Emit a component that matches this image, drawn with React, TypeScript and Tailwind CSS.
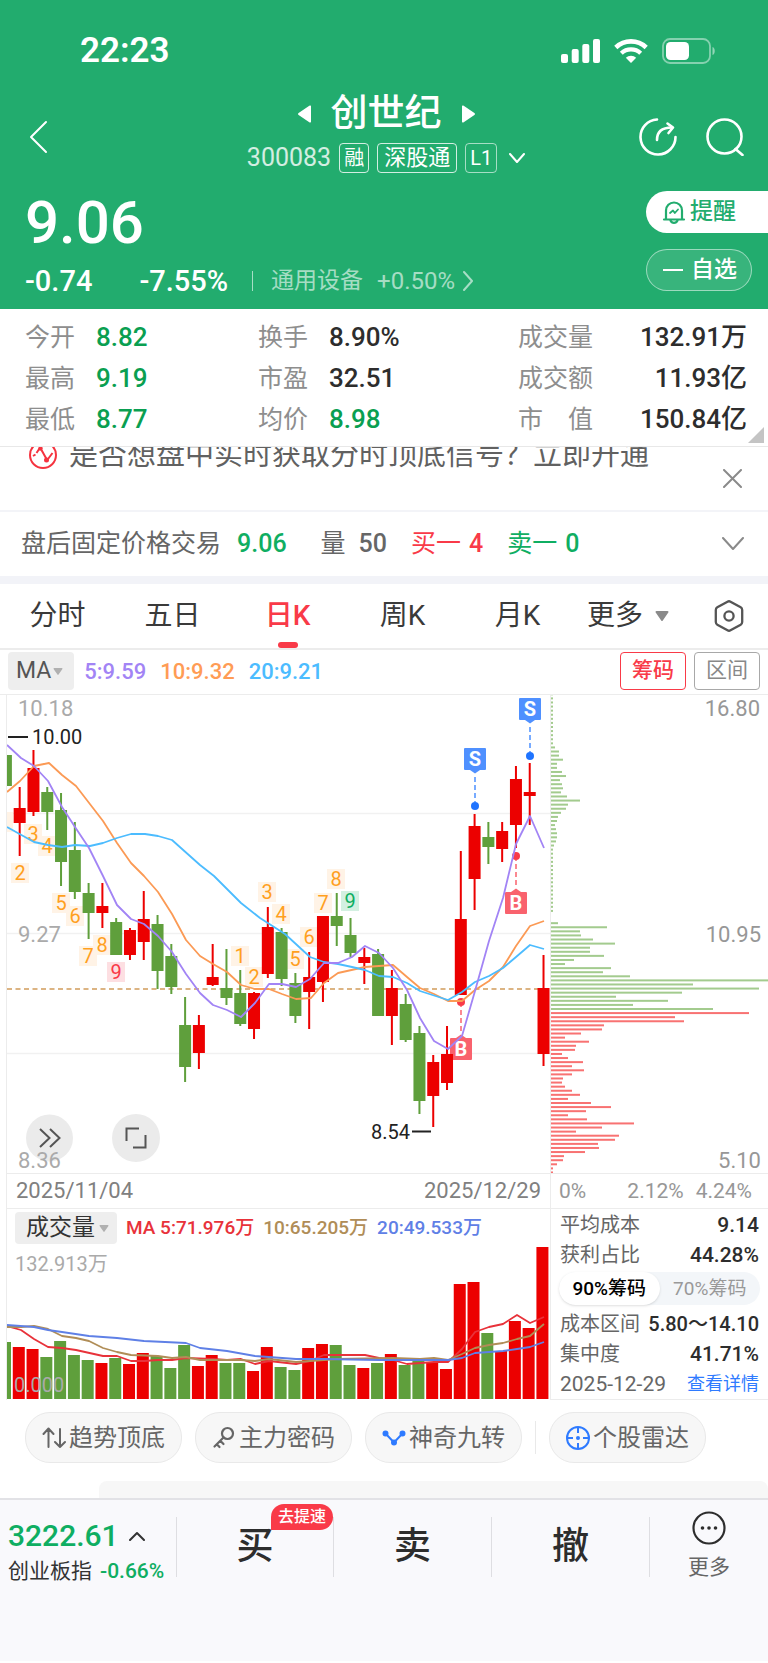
import React from "react";

type Candle = {
  up: boolean;
  high: number;
  top: number;
  bottom: number;
  low: number;
  volume: number;
};

const RED = "#ec0000";
const GREEN = "#5f9f3c";
const STEP = 13.785;

// up, high, body top, body bottom, low, top of the volume bar
const rows: [number, number, number, number, number, number][] = [
  [0, 755, 755, 786, 786, 1342],
  [1, 787, 808, 823, 856, 1347],
  [1, 750, 768, 812, 816, 1349],
  [0, 787, 792, 812, 830, 1357],
  [0, 793, 810, 862, 886, 1341],
  [0, 822, 850, 892, 899, 1355],
  [0, 883, 893, 913, 939, 1360],
  [1, 883, 906, 913, 928, 1363],
  [0, 918, 922, 955, 955, 1358],
  [1, 928, 930, 955, 960, 1364],
  [1, 891, 919, 942, 960, 1353],
  [0, 915, 924, 971, 989, 1356],
  [0, 944, 956, 987, 994, 1368],
  [0, 997, 1025, 1067, 1082, 1345],
  [1, 1015, 1025, 1053, 1069, 1366],
  [1, 944, 977, 985, 986, 1355],
  [0, 949, 988, 998, 1005, 1363],
  [0, 970, 993, 1024, 1026, 1363],
  [1, 992, 993, 1029, 1039, 1371],
  [1, 907, 927, 974, 978, 1347],
  [0, 928, 932, 979, 986, 1367],
  [0, 973, 983, 1016, 1023, 1370],
  [1, 952, 977, 992, 1029, 1348],
  [1, 916, 916, 982, 1002, 1344],
  [0, 893, 916, 926, 946, 1345],
  [0, 918, 935, 953, 957, 1365],
  [1, 948, 957, 963, 984, 1368],
  [0, 949, 954, 1016, 1016, 1363],
  [1, 970, 988, 1016, 1045, 1354],
  [0, 994, 1004, 1040, 1042, 1365],
  [0, 1026, 1033, 1101, 1114, 1360],
  [1, 1055, 1062, 1096, 1127, 1362],
  [1, 1026, 1054, 1083, 1090, 1369],
  [1, 851, 919, 995, 995, 1284],
  [1, 814, 826, 879, 910, 1282],
  [0, 822, 837, 847, 864, 1333],
  [1, 822, 831, 849, 862, 1351],
  [1, 766, 779, 825, 848, 1321],
  [1, 763, 792, 796, 825, 1328],
  [1, 955, 988, 1054, 1066, 1247],
];

const candles: Candle[] = rows.map(([up, high, top, bottom, low, volume]) => ({
  up: up === 1,
  high,
  top,
  bottom,
  low,
  volume,
}));

const ma5 =
  "7,745 21,758 34,766 48,781 62,807 75,827 89,848 103,876 117,905 131,919 144,924 158,936 172,952 186,974 200,993 213,1005 227,1010 241,1017 255,1003 269,984 282,984 296,987 310,979 324,963 338,963 352,957 365,946 379,953 393,968 407,990 420,1018 434,1041 448,1049 462,1036 475,991 489,941 503,898 516,844 530,816 544,848";
const ma10 =
  "7,792 20,781 34,766 49,763 62,775 76,786 103,821 117,843 131,863 144,876 158,892 172,914 186,940 200,956 213,964 227,972 241,985 255,989 269,989 282,994 296,999 311,998 324,983 338,973 365,967 379,966 393,965 407,977 420,988 434,994 448,1001 462,1001 475,990 489,981 503,967 516,946 530,926 544,921";
const ma20 =
  "7,827 34,842 48,845 62,847 75,845 90,846 103,843 117,838 131,834 145,834 158,836 172,840 200,865 214,876 228,890 241,903 260,918 285,934 310,957 324,962 338,964 352,967 365,970 379,976 393,977 407,983 420,991 448,1000 462,992 475,982 489,976 503,968 516,957 530,945 544,949";

const vol5 =
  "7,1326 21,1330 34,1339 48,1347 62,1348 76,1350 103,1356 117,1356 131,1361 144,1361 158,1360 172,1360 186,1358 213,1359 227,1360 241,1359 255,1364 269,1361 296,1364 310,1361 324,1355 365,1355 379,1358 393,1360 407,1364 434,1362 448,1362 462,1349 475,1332 489,1327 503,1324 517,1315 530,1323 544,1317";
const vol10 =
  "7,1327 21,1327 34,1326 48,1329 62,1336 76,1338 89,1341 103,1348 117,1352 131,1355 158,1356 172,1358 186,1357 200,1360 241,1360 255,1361 269,1359 296,1362 324,1360 338,1359 393,1358 420,1359 434,1358 448,1360 462,1354 475,1348 489,1345 503,1343 517,1339 530,1336 544,1324";
const vol20 =
  "7,1325 34,1327 48,1330 62,1332 89,1336 117,1338 144,1341 186,1343 200,1348 227,1351 255,1356 296,1359 324,1359 379,1360 448,1360 462,1358 475,1353 503,1351 517,1349 530,1347 544,1342";

const counts: { n: string; x: number; y: number; tone?: "red" | "green" }[] = [
  { n: "1", x: 4, y: 822 },
  { n: "2", x: 20, y: 873 },
  { n: "3", x: 33, y: 834 },
  { n: "4", x: 47, y: 846 },
  { n: "5", x: 61, y: 903 },
  { n: "6", x: 75, y: 916 },
  { n: "7", x: 88, y: 956 },
  { n: "8", x: 102, y: 945 },
  { n: "9", x: 116, y: 972, tone: "red" },
  { n: "1", x: 240, y: 956 },
  { n: "2", x: 254, y: 977 },
  { n: "3", x: 267, y: 892 },
  { n: "4", x: 281, y: 914 },
  { n: "5", x: 295, y: 959 },
  { n: "6", x: 309, y: 937 },
  { n: "7", x: 323, y: 903 },
  { n: "8", x: 336, y: 879 },
  { n: "9", x: 350, y: 901, tone: "green" },
];

const chipsAbove = [
  2, 2, 2, 2, 2, 2, 2, 2, 2, 2, 2, 2, 2, 4, 8, 8, 12, 6, 6, 11, 15, 9, 11, 12,
  10, 16, 29, 17, 15, 10, 7, 6, 4, 5, 6, 6, 5, 3, 2, 2, 2, 2, 2, 2, 2, 2, 2, 2,
  2, 2, 2, 2, 2, 2, 0, 0, 7, 56, 29, 30, 42, 64, 39, 39, 53, 23, 14, 60, 52,
  79, 217, 142, 208, 131, 65, 117, 82, 162,
];
const chipsBelow = [
  198, 124, 133, 53, 51, 30, 14, 38, 25, 24, 11, 17, 32, 21, 33, 21, 12, 11,
  14, 21, 29, 17, 40, 60, 35, 17, 36, 83, 51, 25, 68, 64, 47, 48, 34, 13, 12,
  6, 2, 2,
];

function Caret({ className }: { className: string }) {
  return (
    <svg viewBox="0 0 14 10" className={className} fill="currentColor" aria-hidden="true">
      <path d="M1.5 0h11a1 1 0 0 1 .8 1.6L7.8 9.4a1 1 0 0 1-1.6 0L.7 1.6A1 1 0 0 1 1.5 0z" />
    </svg>
  );
}

function Chevron({ className, d, box }: { className: string; d: string; box: string }) {
  return (
    <svg
      viewBox={box}
      className={className}
      fill="none"
      stroke="currentColor"
      strokeWidth="2"
      strokeLinecap="round"
      strokeLinejoin="round"
      aria-hidden="true"
    >
      <path d={d} />
    </svg>
  );
}

function StatusBar() {
  return (
    <div className="flex items-center justify-between pt-8 pr-[52px] pl-20">
      <span className="text-[35px] leading-[38px] font-semibold">22:23</span>
      <div className="flex items-center gap-[14px]">
        <svg viewBox="0 0 39 24" className="h-6 w-[39px]" fill="currentColor" aria-hidden="true">
          <rect x="0" y="15" width="7" height="9" rx="2" />
          <rect x="10.7" y="10" width="7" height="14" rx="2" />
          <rect x="21.3" y="5" width="7" height="19" rx="2" />
          <rect x="32" y="0" width="7" height="24" rx="2" />
        </svg>
        <svg viewBox="0 0 34 24" className="h-6 w-[34px]" fill="none" stroke="currentColor" aria-hidden="true">
          <path d="M1.8 8.5a22 22 0 0 1 30.4 0" strokeWidth="4.6" />
          <path d="M7.3 14.3a14 14 0 0 1 19.4 0" strokeWidth="4.2" />
          <path d="M17 24l-5.2-5.2a7.5 7.5 0 0 1 10.4 0z" fill="currentColor" stroke="none" />
        </svg>
        <svg viewBox="0 0 54 26" className="h-[26px] w-[54px]" aria-hidden="true">
          <rect x="1" y="1" width="47" height="24" rx="7" fill="none" stroke="#fff" strokeOpacity=".45" strokeWidth="1.8" />
          <rect x="4" y="4" width="23" height="18" rx="4.5" fill="#fff" />
          <path d="M50.5 9c3 .8 3 7.2 0 8z" fill="#fff" fillOpacity=".5" />
        </svg>
      </div>
    </div>
  );
}

function Header() {
  return (
    <header className="bg-[#22ac6e] pb-3 text-white">
      <StatusBar />
      <div className="grid grid-cols-[1fr_auto_1fr] items-center pt-[18px] pr-6 pl-7">
        <button type="button" aria-label="返回" className="justify-self-start pt-3">
          <Chevron box="0 0 20 34" d="M18 2 3 17l15 15" className="h-[34px] w-5" />
        </button>
        <div>
          <div className="flex items-center justify-center gap-5">
            <svg viewBox="0 0 13 18" className="h-[18px] w-[13px]" fill="currentColor" aria-hidden="true">
              <path d="M13 1.5v15a1 1 0 0 1-1.7.8L.6 10a1.3 1.3 0 0 1 0-2L11.3.7A1 1 0 0 1 13 1.5z" />
            </svg>
            <h1 className="text-[37px] leading-[51px] font-medium">创世纪</h1>
            <svg viewBox="0 0 13 18" className="h-[18px] w-[13px]" fill="currentColor" aria-hidden="true">
              <path d="M0 1.5v15a1 1 0 0 0 1.7.8L12.4 10a1.3 1.3 0 0 0 0-2L1.7.7A1 1 0 0 0 0 1.5z" />
            </svg>
          </div>
          <div className="mt-1 flex items-center gap-2">
            <span className="text-[25px] leading-[30px] text-white/80">300083</span>
            <span className="rounded border border-white/80 px-1 text-[20px] leading-7">融</span>
            <span className="rounded border border-white/80 px-[6px] text-[22px] leading-7">深股通</span>
            <span className="rounded border border-white/60 px-1 text-[20px] leading-7">L1</span>
            <Chevron box="0 0 16 10" d="m1 1 7 8 7-8" className="ml-1 h-[10px] w-4" />
          </div>
        </div>
        <div className="flex gap-[29px] justify-self-end pt-3">
          <button type="button" aria-label="分享">
            <svg viewBox="0 0 38 38" className="size-[38px]" fill="none" stroke="currentColor" strokeWidth="2.6" strokeLinecap="round" strokeLinejoin="round" aria-hidden="true">
              <path d="M18 1.5A17.5 17.5 0 1 0 36.5 19" />
              <path d="M18 22c0-8 4-12.5 15-12.5" />
              <path d="m28.5 5.5 5.5 4-4.5 5.5" />
            </svg>
          </button>
          <button type="button" aria-label="搜索">
            <svg viewBox="0 0 38 38" className="size-[38px]" fill="none" stroke="currentColor" strokeWidth="2.6" strokeLinecap="round" aria-hidden="true">
              <circle cx="18.5" cy="18.5" r="17" />
              <path d="m29.5 31 7 6" />
            </svg>
          </button>
        </div>
      </div>
      <div className="mt-[18px] flex justify-between">
        <div className="pl-[25px]">
          <div className="text-[60px] leading-[64px] font-medium">9.06</div>
          <div className="mt-[10px] flex items-center text-[29px] leading-8 font-medium">
            <span>-0.74</span>
            <span className="ml-[47px]">-7.55%</span>
            <a href="#sector" className="ml-6 flex items-center font-normal text-white/60">
              <span className="mr-[18px] h-5 w-px bg-white/60" />
              <span className="text-[23px]">通用设备</span>
              <span className="mr-2 ml-[14px] text-[24px]">+0.50%</span>
              <Chevron box="0 0 11 20" d="m1 1 8 9-8 9" className="h-5 w-[11px]" />
            </a>
          </div>
        </div>
        <div className="flex flex-col items-end gap-4">
          <button type="button" className="flex h-[42px] items-center gap-1 rounded-l-full bg-white pr-8 pl-4 text-[23px] font-medium text-[#22ac6e]">
            <svg viewBox="0 0 24 24" className="size-6" fill="none" stroke="currentColor" strokeWidth="2.2" strokeLinecap="round" strokeLinejoin="round" aria-hidden="true">
              <path d="M2 19.500h20M4 19V10.500a8 8 0 0 1 16 0V19" />
              <path d="M8.500 20.500a3.800 3.800 0 0 0 7 0" />
              <path d="m8 13 3-2.500 1.800 2.500L16 9.500" strokeWidth="1.8" />
            </svg>
            提醒
          </button>
          <button type="button" className="mr-4 flex h-[42px] items-center gap-2 rounded-full border border-white/50 bg-white/10 pr-[14px] pl-4 text-[23px] font-medium">
            <span className="h-[2px] w-5 bg-white" />
            自选
          </button>
        </div>
      </div>
    </header>
  );
}

function Stat({ label, value, tone }: { label: string; value: string; tone: string }) {
  return (
    <div className="flex items-center gap-[21px]">
      <dt className="text-[#8e8e8e]">{label}</dt>
      <dd className={"text-[26px] font-medium " + tone}>{value}</dd>
    </div>
  );
}

function WideStat({ label, value }: { label: string; value: string }) {
  return (
    <div className="flex items-center justify-between">
      <dt className="whitespace-pre text-[#8e8e8e]">{label}</dt>
      <dd className="text-[26px] font-medium text-[#2d2d2d]">{value}</dd>
    </div>
  );
}

function Stats() {
  return (
    <section className="relative border-b border-[#e8e8e8] pt-2 pr-[21px] pb-[6px] pl-[25px]">
      <dl className="grid grid-cols-[233fr_260fr_229fr] text-[25px] leading-[41px]">
        <Stat label="今开" value="8.82" tone="text-[#0a9f51]" />
        <Stat label="换手" value="8.90%" tone="text-[#2d2d2d]" />
        <WideStat label="成交量" value="132.91万" />
        <Stat label="最高" value="9.19" tone="text-[#0a9f51]" />
        <Stat label="市盈" value="32.51" tone="text-[#2d2d2d]" />
        <WideStat label="成交额" value="11.93亿" />
        <Stat label="最低" value="8.77" tone="text-[#0a9f51]" />
        <Stat label="均价" value="8.98" tone="text-[#0a9f51]" />
        <WideStat label="市　值" value="150.84亿" />
      </dl>
      <svg viewBox="0 0 16 16" className="absolute right-1 bottom-[3px] size-4 text-[#c4c4c4]" fill="currentColor" aria-hidden="true">
        <path d="M16 0v16H0z" />
      </svg>
    </section>
  );
}

function Notice() {
  return (
    <section className="flex items-start justify-between overflow-hidden border-b-2 border-[#f3f4f8] pr-[26px] pb-[22px] pl-[29px]">
      <div className="-mt-3 flex items-center gap-3 text-[29px] leading-10 text-[#616161]">
        <svg viewBox="0 0 28 28" className="size-7 text-[#f5333f]" fill="none" stroke="currentColor" strokeWidth="2" aria-hidden="true">
          <circle cx="14" cy="14" r="13" />
          <path d="m4 15 2.500-1.500M7.500 12l3-4.500m2 1.500 5 9m1.500 0 4.500-6" />
          <circle cx="11.5" cy="7.5" r="2.2" fill="currentColor" stroke="none" />
          <circle cx="17.5" cy="19" r="2.5" fill="currentColor" stroke="none" />
        </svg>
        是否想盘中实时获取分时顶底信号？立即开通
      </div>
      <button type="button" aria-label="关闭" className="mt-[22px] text-[#8a8a8a]">
        <Chevron box="0 0 19 19" d="m1 1 17 17M18 1 1 18" className="size-[19px]" />
      </button>
    </section>
  );
}

function AfterHours() {
  return (
    <section className="flex items-center justify-between pr-6 pl-[21px] text-[25px] leading-[64px] text-[#666]">
      <div className="flex">
        盘后固定价格交易
        <span className="ml-4 font-medium text-[#0fae62]">9.06</span>
        <span className="ml-[34px]">量</span>
        <span className="ml-[13px] font-medium">50</span>
        <span className="ml-6 text-[#f93a48]">买一</span>
        <span className="ml-2 font-medium text-[#f93a48]">4</span>
        <span className="ml-6 text-[#0fae62]">卖一</span>
        <span className="ml-2 font-medium text-[#0fae62]">0</span>
      </div>
      <button type="button" aria-label="展开" className="text-[#8a8a8a]">
        <Chevron box="0 0 22 14" d="m1 1 10 11L21 1" className="h-[14px] w-[22px]" />
      </button>
    </section>
  );
}

function Tabs() {
  return (
    <nav className="grid grid-cols-[repeat(5,115fr)_193fr] border-t-8 border-b-2 border-t-[#f2f3f8] border-b-[#ececec] text-[28px] leading-[64px] text-[#3a3a3a]">
      <button type="button">分时</button>
      <button type="button">五日</button>
      <button type="button" className="relative font-medium text-[#f93a48]">
        日K
        <span className="absolute bottom-0 left-1/2 h-[6px] w-5 -translate-x-1/2 rounded-full bg-[#f93a48]" />
      </button>
      <button type="button">周K</button>
      <button type="button">月K</button>
      <div className="flex items-center justify-between pr-6 pl-3">
        <button type="button" className="flex items-center gap-3">
          更多
          <Caret className="h-[10px] w-[14px] text-[#8a8a8a]" />
        </button>
        <button type="button" aria-label="设置" className="text-[#555]">
          <svg viewBox="0 0 30 32" className="h-8 w-[30px]" fill="none" stroke="currentColor" strokeWidth="2.3" strokeLinejoin="round" aria-hidden="true">
            <path d="M13.500 1.700a3 3 0 0 1 3 0l10.200 5.600a3 3 0 0 1 1.500 2.600v12.200a3 3 0 0 1-1.500 2.600l-10.200 5.600a3 3 0 0 1-3 0L3.300 24.700a3 3 0 0 1-1.500-2.600V9.900a3 3 0 0 1 1.500-2.600z" />
            <circle cx="15" cy="16" r="4.6" />
          </svg>
        </button>
      </div>
    </nav>
  );
}

function MaBar() {
  return (
    <div className="flex items-center justify-between border-b border-[#ececec] px-2 pt-[2px] pb-1 text-[22px]">
      <div className="flex items-center gap-[14px] font-medium">
        <button type="button" className="-mr-1 flex h-[38px] items-center gap-[2px] rounded bg-[#eee] pr-[11px] pl-2 text-[23px] font-normal text-[#555]">
          MA
          <Caret className="h-[7px] w-[10px] text-[#b0b0b0]" />
        </button>
        <span className="text-[#a284f5]">5:9.59</span>
        <span className="text-[#ff9c55]">10:9.32</span>
        <span className="text-[#4cbcff]">20:9.21</span>
      </div>
      <div className="flex gap-2 text-[21px]">
        <button type="button" className="h-[38px] rounded border border-[#f93a48] px-[11px] font-medium text-[#f93a48]">
          筹码
        </button>
        <button type="button" className="h-[38px] rounded border border-[#a8a8a8] px-[11px] text-[#888]">
          区间
        </button>
      </div>
    </div>
  );
}

function CountTag({ n, x, y, tone }: { n: string; x: number; y: number; tone?: "red" | "green" }) {
  const fill = tone === "red" ? "#fddfe2" : tone === "green" ? "#d3f0e1" : "#fff3e6";
  const color = tone === "red" ? "#f93a48" : tone === "green" ? "#0fae62" : "#ffa01e";
  return (
    <g>
      <rect x={x - 9} y={y - 10} width="18" height="20" fill={fill} />
      <text x={x} y={y + 7} fontSize="20" textAnchor="middle" fill={color}>
        {n}
      </text>
    </g>
  );
}

function TradeMark({ kind, x, y }: { kind: "B" | "S"; x: number; y: number }) {
  const sell = kind === "S";
  const dir = sell ? 1 : -1;
  const box = sell ? "#4f90ff" : "#f9626d";
  const dot = sell ? "#1f74ff" : "#f93a48";
  return (
    <g>
      <circle cx={x} cy={y + 47 * dir} r="4" fill={dot} />
      <path d={`M${x} ${y + 18 * dir}V${y + 43 * dir}`} stroke={dot} strokeWidth="1.2" strokeDasharray="5 3" />
      <rect x={x - 11} y={y - 11} width="22" height="22" rx="1" fill={box} />
      <path d={`M${x - 5} ${y + 11 * dir}h10l-5 ${3.5 * dir}z`} fill={box} />
      <text x={x} y={y + 7} fontSize="20" fontWeight="700" textAnchor="middle" fill="#fff">
        {kind}
      </text>
    </g>
  );
}

function PriceChart() {
  return (
    <div className="relative">
      <svg viewBox="7 695 543 478" className="w-full" role="img" aria-label="日K线">
        <path d="M7 813.500h543M7 933.500h543M7 1053.500h543" stroke="#f1f1f1" strokeWidth="1.5" />
        <path d="M7 989h543" stroke="#dcb483" strokeWidth="1.8" strokeDasharray="5 3.5" />
        {counts.map((c) => (
          <CountTag key={c.x} {...c} />
        ))}
        <TradeMark kind="B" x={461} y={1049} />
        {candles.map((c, i) => {
          const x = 5.9 + i * STEP;
          const color = c.up ? RED : GREEN;
          return (
            <g key={i} fill={color}>
              <rect x={x - 1} y={c.high} width="2" height={c.low - c.high} />
              <rect x={x - 6} y={c.top} width="12" height={c.bottom - c.top} />
            </g>
          );
        })}
        <TradeMark kind="S" x={475} y={759} />
        <TradeMark kind="S" x={530} y={709} />
        <TradeMark kind="B" x={516} y={903} />
        <g fill="none" strokeWidth="1.8" strokeLinejoin="round">
          <polyline points={ma10} stroke="#fb9a55" />
          <polyline points={ma20} stroke="#4cbcff" />
          <polyline points={ma5} stroke="#a284f5" />
        </g>
        <path d="M8 737h20M412 1131.500h19" stroke="#222" strokeWidth="2" />
        <g fontSize="20" fill="#222">
          <text x="32" y="744">10.00</text>
          <text x="371" y="1139">8.54</text>
        </g>
        <g fontSize="22" fill="#aaa">
          <text x="18" y="716">10.18</text>
          <text x="18" y="942">9.27</text>
        </g>
        <circle cx="49.5" cy="1138" r="23.5" fill="#ebebeb" />
        <text x="18" y="1168" fontSize="22" fill="#aaa">8.36</text>
      </svg>
      <div className="absolute bottom-[11px] left-[19px] flex gap-[38px] text-[#555]">
        <button type="button" aria-label="快进" className="grid size-12 place-items-center">
          <svg viewBox="0 0 22 20" className="h-5 w-[22px]" fill="none" stroke="currentColor" strokeWidth="2" aria-hidden="true">
            <path d="m1 1 9.500 9L1 19M11 1l9.500 9L11 19" />
          </svg>
        </button>
        <button type="button" aria-label="全屏" className="grid size-12 place-items-center rounded-full bg-[#ebebeb]">
          <svg viewBox="0 0 22 22" className="size-[22px]" fill="none" stroke="currentColor" strokeWidth="2" aria-hidden="true">
            <path d="M14 1.500H1.500V14M8 20.500h12.500V8" />
          </svg>
        </button>
      </div>
    </div>
  );
}

function VolumeChart() {
  return (
    <div>
      <div className="flex items-center gap-[9px] pt-[3px] pl-2 text-[19px] font-medium">
        <button type="button" className="flex h-8 items-center gap-1 rounded bg-[#eee] pr-2 pl-[11px] text-[23px] font-normal text-[#333]">
          成交量
          <Caret className="h-[7px] w-[10px] text-[#b0b0b0]" />
        </button>
        <span className="text-[#e8323a]">MA 5:71.976万</span>
        <span className="text-[#b08d57]">10:65.205万</span>
        <span className="text-[#5f80e6]">20:49.533万</span>
      </div>
      <svg viewBox="7 1244 543 155" className="w-full" role="img" aria-label="成交量">
        <text x="15" y="1271" fontSize="20" fill="#aaa">132.913万</text>
        {candles.map((c, i) => (
          <rect
            key={i}
            x={-1 + i * 13.78}
            y={c.volume}
            width="12"
            height={1399 - c.volume}
            fill={c.up ? RED : GREEN}
          />
        ))}
        <g fill="none" strokeWidth="1.8" strokeLinejoin="round">
          <polyline points={vol5} stroke="#e8323a" />
          <polyline points={vol10} stroke="#b08d57" />
          <polyline points={vol20} stroke="#5f80e6" />
        </g>
        <text x="14" y="1392" fontSize="20" fill="#aaa">0.000</text>
      </svg>
    </div>
  );
}

function ChipBars({ widths, from, color }: { widths: number[]; from: number; color: string }) {
  return (
    <g fill={color}>
      {widths.map((w, i) => (
        <rect key={i} x="551" y={693.3 + (from + i) * 4.087} width={w} height="2" />
      ))}
    </g>
  );
}

function ChipPanel() {
  return (
    <aside className="w-[218px] shrink-0 border-l border-[#ececec]">
      <svg viewBox="551 695 217 478" className="w-full" role="img" aria-label="筹码分布">
        <ChipBars widths={chipsAbove} from={0} color="#a3cb8e" />
        <ChipBars widths={chipsBelow} from={chipsAbove.length} color="#f87272" />
        <g fontSize="22" fill="#979797" textAnchor="end">
          <text x="760" y="716">16.80</text>
          <text x="761" y="942">10.95</text>
          <text x="761" y="1168">5.10</text>
        </g>
      </svg>
      <div className="flex border-y border-[#ececec] pr-4 pl-2 text-[21px] leading-[34px] text-[#979797]">
        <span className="mr-auto">0%</span>
        <span className="mr-3">2.12%</span>
        <span>4.24%</span>
      </div>
      <dl className="pt-px pr-[9px] pl-[9px] text-[20px] leading-[30px] text-[#666]">
        <div className="flex justify-between">
          <dt>平均成本</dt>
          <dd className="text-[21px] font-medium text-[#2d2d2d]">9.14</dd>
        </div>
        <div className="flex justify-between">
          <dt>获利占比</dt>
          <dd className="text-[21px] font-medium text-[#2d2d2d]">44.28%</dd>
        </div>
      </dl>
      <div className="mx-2 mt-[2px] mb-1 grid grid-cols-2 rounded-full bg-[#f3f6f9] text-[19px] leading-[33px] text-[#999]">
        <button type="button" className="rounded-full bg-white font-medium text-black shadow-sm">
          90%筹码
        </button>
        <button type="button">70%筹码</button>
      </div>
      <dl className="px-[9px] text-[20px] leading-[30px] text-[#666]">
        <div className="flex justify-between">
          <dt>成本区间</dt>
          <dd className="font-medium text-[#2d2d2d]">5.80～14.10</dd>
        </div>
        <div className="flex justify-between">
          <dt>集中度</dt>
          <dd className="text-[21px] font-medium text-[#2d2d2d]">41.71%</dd>
        </div>
      </dl>
      <div className="flex justify-between border-b border-[#ececec] px-[9px] text-[20px] leading-[30px] text-[#666]">
        <span className="text-[21px]">2025-12-29</span>
        <a href="#detail" className="text-[18px] text-[#2f7bff]">
          查看详情
        </a>
      </div>
    </aside>
  );
}

function Charts() {
  return (
    <section className="flex">
      <div className="ml-[6px] min-w-0 flex-1 border-l border-[#ececec]">
        <PriceChart />
        <div className="flex justify-between border-y border-[#ececec] px-[9px] text-[22px] leading-[34px] text-[#808080]">
          <span>2025/11/04</span>
          <span>2025/12/29</span>
        </div>
        <VolumeChart />
      </div>
      <ChipPanel />
    </section>
  );
}

const toolClass =
  "flex h-[51px] shrink-0 items-center gap-[3px] rounded-[25px] border border-[#e9e9e9] bg-[#f7f7f7] px-4";

function Tools() {
  return (
    <section className="flex items-center gap-[13px] overflow-hidden pt-[12px] pl-[25px] text-[24px] text-[#666]">
      <button type="button" className={toolClass}>
        <svg viewBox="0 0 24 24" className="size-6" fill="none" stroke="currentColor" strokeWidth="2" strokeLinecap="round" strokeLinejoin="round" aria-hidden="true">
          <path d="M6.500 21V3M1.500 8l5-5.500 5 5.500M18 3v18M13 16l5 5 5-5" />
        </svg>
        趋势顶底
      </button>
      <button type="button" className={toolClass}>
        <svg viewBox="0 0 24 24" className="size-6" fill="none" stroke="currentColor" strokeWidth="2.2" strokeLinecap="round" strokeLinejoin="round" aria-hidden="true">
          <circle cx="15.5" cy="7.5" r="5.5" />
          <path d="M11.500 11.500 2.500 20.500M8.500 15l3 3M5 18.500l2.500 2.500" />
        </svg>
        主力密码
      </button>
      <button type="button" className={toolClass}>
        <svg viewBox="0 0 24 24" className="size-6 text-[#2f7bff]" fill="currentColor" stroke="currentColor" strokeWidth="2" aria-hidden="true">
          <path d="m3.500 7.500 8.500 9 8.500-9" fill="none" />
          <circle cx="3.5" cy="7.5" r="2" />
          <circle cx="20.5" cy="7.5" r="2" />
          <circle cx="12" cy="16.5" r="2" />
        </svg>
        神奇九转
      </button>
      <span className="h-[33px] w-px shrink-0 bg-[#e9e9e9]" />
      <button type="button" className={toolClass}>
        <svg viewBox="0 0 24 24" className="size-6 text-[#2f7bff]" fill="none" stroke="currentColor" strokeWidth="2" aria-hidden="true">
          <circle cx="12" cy="12" r="11" />
          <path d="M12 1v6M12 17v6M1 12h6M17 12h6" />
          <circle cx="12" cy="12" r="2" fill="currentColor" stroke="none" />
        </svg>
        个股雷达
      </button>
    </section>
  );
}

function Footer() {
  return (
    <footer className="border-t-2 border-[#e2e2e6] bg-[#f9f9fc] pt-[17px] pb-[74px]">
      <div className="grid grid-cols-[176fr_158fr_158fr_158fr_118fr] items-start">
        <a href="#index" className="pl-2">
          <span className="flex items-center gap-[10px] text-[30px] leading-[38px] font-medium text-[#0fae62]">
            3222.61
            <Chevron box="0 0 16 10" d="m1 9 7-7 7 7" className="h-[10px] w-4 text-[#333]" />
          </span>
          <span className="flex items-center gap-2 text-[21px] leading-8 whitespace-nowrap text-[#333]">
            创业板指
            <span className="font-medium text-[#0fae62]">-0.66%</span>
          </span>
        </a>
        <button type="button" className="relative border-x border-[#dedee2] text-[37px] leading-[60px] font-medium text-[#2d2d2d]">
          买
          <span className="absolute -top-[13px] right-0 rounded-[13px] rounded-bl-none bg-[#f93a48] px-[7px] text-[16px] leading-[26px] text-white">
            去提速
          </span>
        </button>
        <button type="button" className="border-r border-[#dedee2] text-[37px] leading-[60px] font-medium text-[#2d2d2d]">
          卖
        </button>
        <button type="button" className="border-r border-[#dedee2] text-[37px] leading-[60px] font-medium text-[#2d2d2d]">
          撤
        </button>
        <button type="button" className="-mt-[6px] flex flex-col items-center gap-2 text-[21px] leading-7 text-[#666]">
          <svg viewBox="0 0 34 34" className="size-[34px] text-[#2d2d2d]" fill="none" stroke="currentColor" strokeWidth="2.2" aria-hidden="true">
            <circle cx="17" cy="17" r="15.5" />
            <g fill="currentColor" stroke="none">
              <circle cx="10.5" cy="17" r="1.8" />
              <circle cx="17" cy="17" r="1.8" />
              <circle cx="23.5" cy="17" r="1.8" />
            </g>
          </svg>
          更多
        </button>
      </div>
    </footer>
  );
}

export default function App() {
  return (
    <div className="w-full overflow-x-hidden bg-white font-[Roboto,'Noto_Sans_CJK_SC',sans-serif]">
      <Header />
      <main>
        <Stats />
        <Notice />
        <AfterHours />
        <Tabs />
        <MaBar />
        <Charts />
        <Tools />
        <div className="mt-[18px] ml-[99px] h-[17px] rounded-t-lg bg-[#f7f7f7]" />
      </main>
      <Footer />
    </div>
  );
}
